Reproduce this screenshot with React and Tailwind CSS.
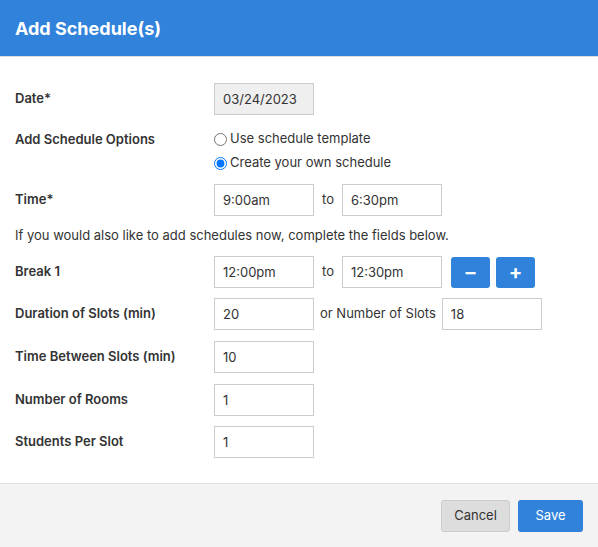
import React, { useState } from 'react';

const inputBase =
  'w-[100px] h-[32px] border border-[#cccccc] px-[8px] text-[13px] text-[#333] focus:outline-none';
const inputCls = `${inputBase} bg-white`;

const Row = ({ label, children, className = '', labelPad = 'pt-[6px]' }) => (
  <div className={`flex items-start ${className}`}>
    <div className={`w-[199px] ${labelPad} text-[13px] font-semibold text-[#333]`}>{label}</div>
    <div className="flex items-start">{children}</div>
  </div>
);

const App = () => {
  const [option, setOption] = useState('own');

  return (
    <div className="w-[598px] h-[547px] flex flex-col bg-white text-[#333]" style={{ fontFamily: 'Inter, "Liberation Sans", sans-serif' }}>
      {/* Header */}
      <div className="h-[57px] bg-[#3182db] border-b border-[#dddddd] flex items-center px-[15px]">
        <h2 className="text-[18px] font-bold text-white">Add Schedule(s)</h2>
      </div>

      {/* Body */}
      <div className="flex-1 px-[15px] pt-[26px]">
        <Row label="Date*">
          <input readOnly value="03/24/2023" className={`${inputBase} bg-[#efefef]`} />
        </Row>

        <Row label="Add Schedule Options" className="mt-[15px]" labelPad="pt-0">
          <div className="flex flex-col gap-[6px] text-[13px]">
            <label className="flex items-center gap-[3px] h-[18px]">
              <input
                type="radio"
                checked={option === 'template'}
                onChange={() => setOption('template')}
                className="m-0 w-[13px] h-[13px]"
              />
              Use schedule template
            </label>
            <label className="flex items-center gap-[3px] h-[18px]">
              <input
                type="radio"
                checked={option === 'own'}
                onChange={() => setOption('own')}
                className="m-0 w-[13px] h-[13px]"
              />
              Create your own schedule
            </label>
          </div>
        </Row>

        <Row label="Time*" className="mt-[12px]">
          <input defaultValue="9:00am" className={inputCls} />
          <span className="px-[8px] pt-[6px] text-[13px]">to</span>
          <input defaultValue="6:30pm" className={inputCls} />
        </Row>

        <p className="mt-[10px] text-[13px]">If you would also like to add schedules now, complete the fields below.</p>

        <Row label="Break 1" className="mt-[10px]">
          <input defaultValue="12:00pm" className={inputCls} />
          <span className="px-[8px] pt-[6px] text-[13px]">to</span>
          <input defaultValue="12:30pm" className={inputCls} />
          <button className="ml-[9px] mt-[1px] w-[39px] h-[31px] rounded-[3px] bg-[#3182db] text-white text-[20px] font-bold flex items-center justify-center leading-none">
            –
          </button>
          <button className="ml-[6px] mt-[1px] w-[39px] h-[31px] rounded-[3px] bg-[#3182db] text-white text-[20px] font-bold flex items-center justify-center leading-none">
            +
          </button>
        </Row>

        <Row label="Duration of Slots (min)" className="mt-[10px]">
          <input defaultValue="20" className={inputCls} />
          <span className="px-[6px] pt-[6px] text-[13px]">or Number of Slots</span>
          <input defaultValue="18" className={inputCls} />
        </Row>

        <Row label="Time Between Slots (min)" className="mt-[11px]">
          <input defaultValue="10" className={inputCls} />
        </Row>

        <Row label="Number of Rooms" className="mt-[11px]">
          <input defaultValue="1" className={inputCls} />
        </Row>

        <Row label="Students Per Slot" className="mt-[10px]">
          <input defaultValue="1" className={inputCls} />
        </Row>
      </div>

      {/* Footer */}
      <div className="h-[64px] bg-[#f3f3f3] border-t border-[#e2e2e2] flex items-center justify-end gap-[8px] px-[15px]">
        <button className="h-[32px] px-[12px] w-[69px] rounded-[3px] border border-[#cccccc] bg-[#dddddd] text-[13px] text-[#333]">
          Cancel
        </button>
        <button className="h-[32px] w-[65px] rounded-[3px] bg-[#3182db] text-[13px] text-white">
          Save
        </button>
      </div>
    </div>
  );
};

export default App;
